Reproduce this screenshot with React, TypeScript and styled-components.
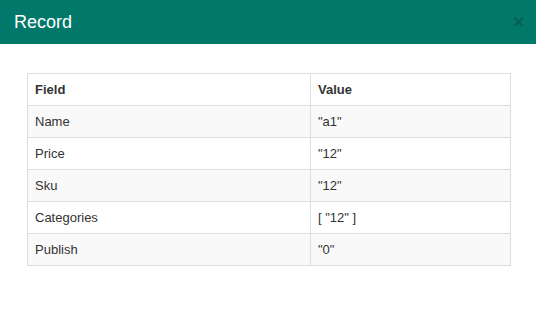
import styled, { createGlobalStyle } from 'styled-components';

const GlobalStyle = createGlobalStyle`
  html, body {
    margin: 0;
    padding: 0;
    background: #ffffff;
  }
  body {
    font-family: "Liberation Sans", Arial, sans-serif;
    color: #333333;
  }
`;

const rows: { field: string; value: string }[] = [
  { field: 'Name', value: '"a1"' },
  { field: 'Price', value: '"12"' },
  { field: 'Sku', value: '"12"' },
  { field: 'Categories', value: '[ "12" ]' },
  { field: 'Publish', value: '"0"' },
];

function App() {
  return (
    <>
      <GlobalStyle />
      <Modal>
        <Header>
          <Title>Record</Title>
          <Close>×</Close>
        </Header>
        <Body>
          <Table>
            <colgroup>
              <Col $width="283px" />
              <Col />
            </colgroup>
            <thead>
              <tr>
                <Th>Field</Th>
                <Th>Value</Th>
              </tr>
            </thead>
            <tbody>
              {rows.map((row, i) => (
                <Row key={row.field} $striped={i % 2 === 0}>
                  <Td>{row.field}</Td>
                  <Td>{row.value}</Td>
                </Row>
              ))}
            </tbody>
          </Table>
        </Body>
      </Modal>
    </>
  );
}

export default App;

const Modal = styled.div`
  width: 536px;
  height: 310px;
  background: #ffffff;
  display: flex;
  flex-direction: column;
`;

const Header = styled.div`
  height: 44px;
  background: #02786b;
  display: flex;
  align-items: center;
  justify-content: space-between;
  padding: 0 12px 0 14px;
  box-sizing: border-box;
`;

const Title = styled.h4`
  margin: 0;
  font-size: 18px;
  font-weight: normal;
  color: #ffffff;
  line-height: 20px;
`;

const Close = styled.span`
  font-size: 19px;
  font-weight: bold;
  line-height: 1;
  color: #000000;
  opacity: 0.2;
  margin-top: -2px;
`;

const Body = styled.div`
  padding: 29px 25px 0 27px;
`;

const Table = styled.table`
  width: 100%;
  table-layout: fixed;
  border-collapse: collapse;
  border: 1px solid #dddddd;
  font-size: 13px;
`;

const Col = styled.col<{ $width?: string }>`
  width: ${p => p.$width || 'auto'};
`;

const Th = styled.th`
  text-align: left;
  font-weight: bold;
  color: #333333;
  padding: 8px 7px;
  line-height: 15px;
  border: 1px solid #dddddd;
`;

const Row = styled.tr<{ $striped: boolean }>`
  background: ${p => (p.$striped ? '#f9f9f9' : '#ffffff')};
`;

const Td = styled.td`
  padding: 8px 7px;
  line-height: 15px;
  border: 1px solid #dddddd;
`;
